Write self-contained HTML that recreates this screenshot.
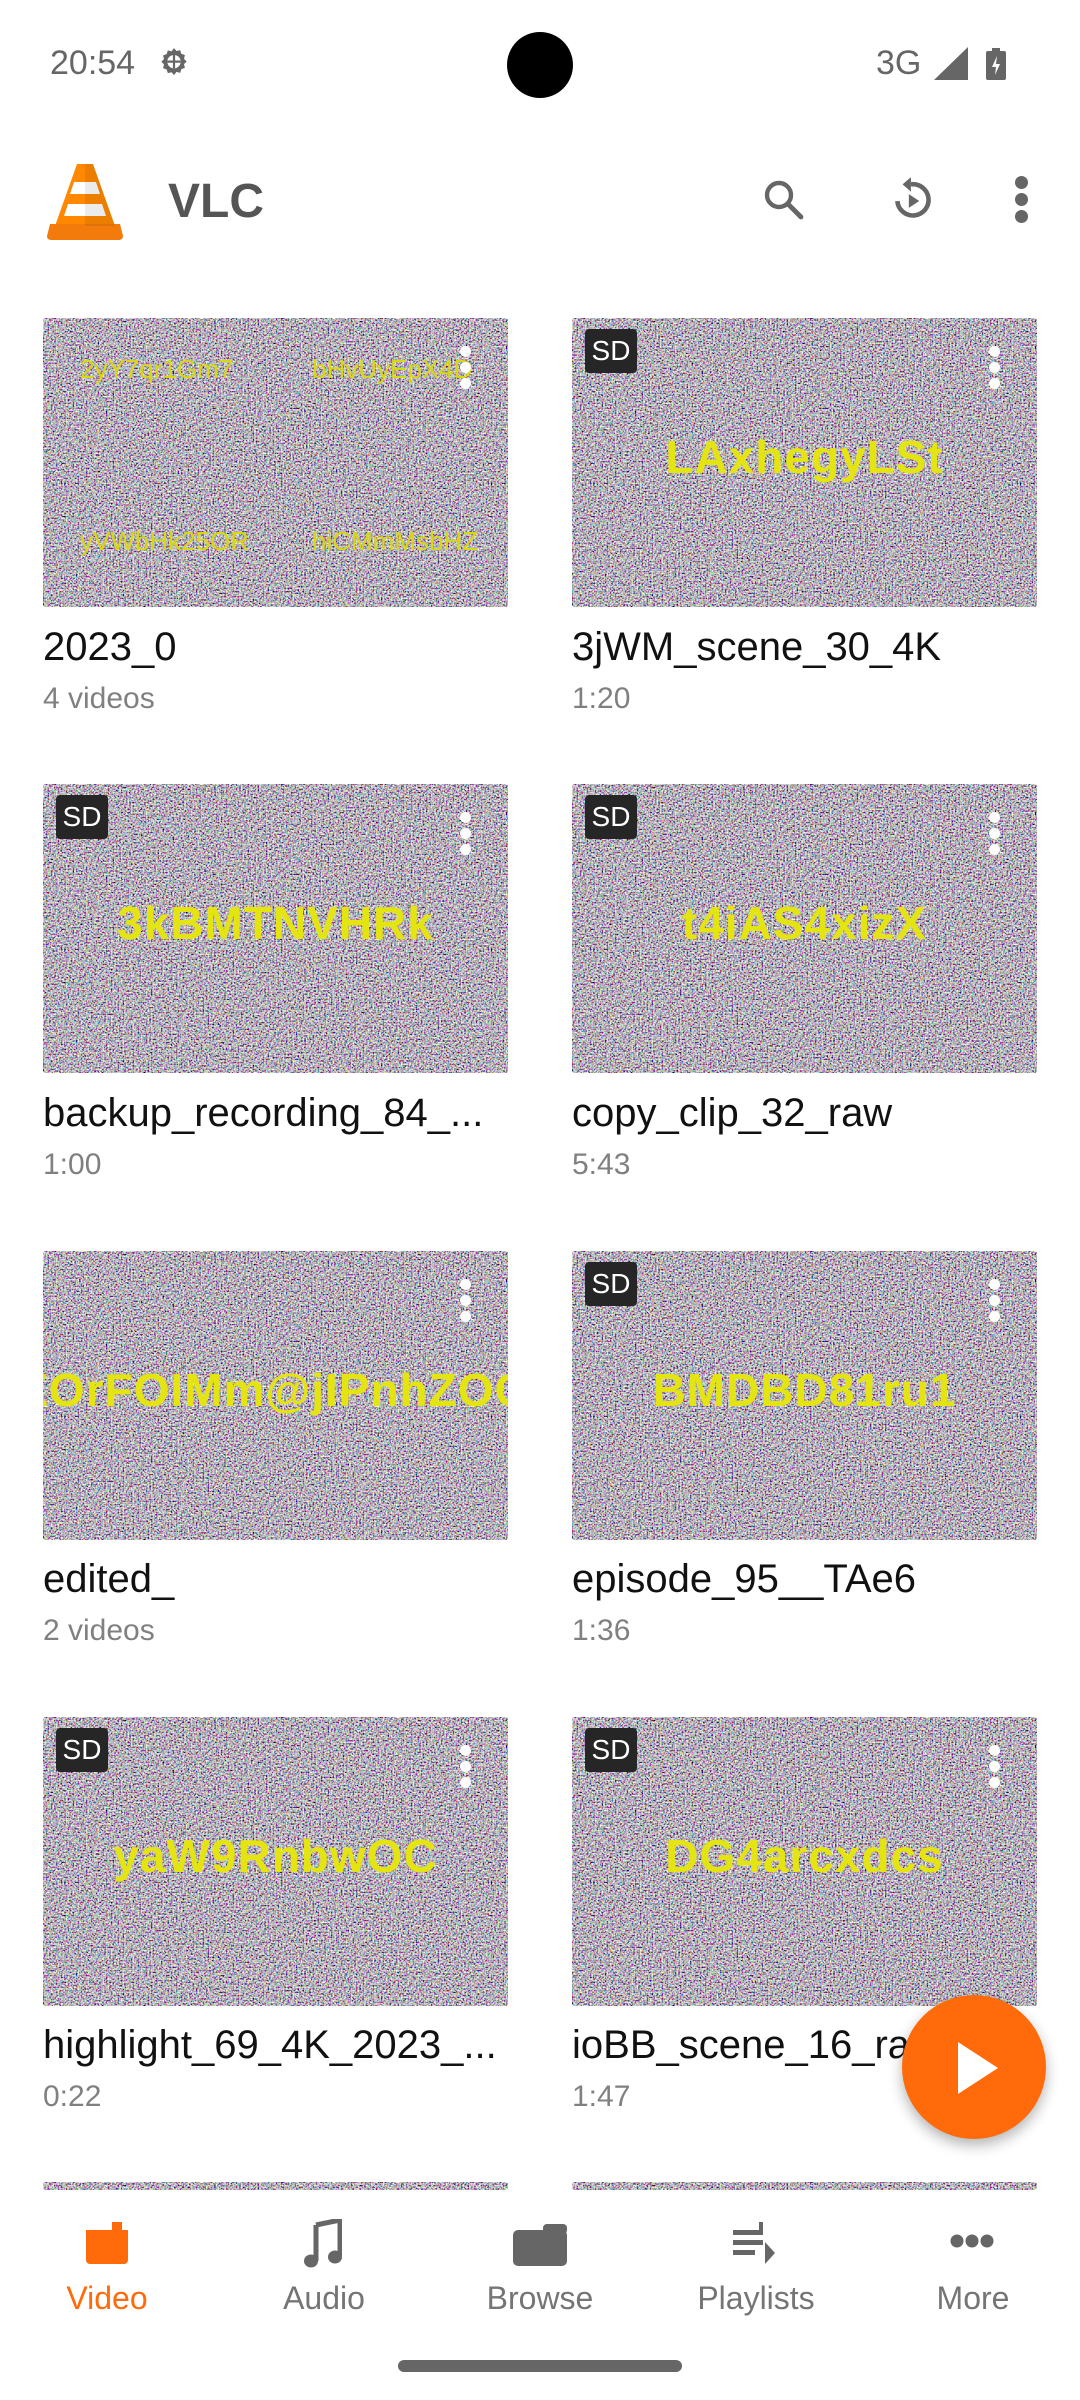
<!DOCTYPE html>
<html><head><meta charset="utf-8">
<style>
*{margin:0;padding:0;box-sizing:border-box}
body{width:1080px;height:2400px;background:#fff;position:relative;overflow:hidden;font-family:"Liberation Sans",sans-serif}
.abs{position:absolute}
.thumb{position:absolute;width:465px;height:289px;overflow:hidden;border-radius:3px;background:#777}
.thumb svg.n{position:absolute;left:0;top:0}
.ct{position:absolute;left:0;right:0;text-align:center;color:#e4e410;font-size:46px;top:112px;white-space:nowrap;letter-spacing:1px;font-weight:bold}
.sm{position:absolute;color:#d8d810;font-size:26px;white-space:nowrap}
.sd{position:absolute;left:13px;top:11px;width:52px;height:44px;background:#262626;border-radius:4px;color:#fff;font-size:28px;text-align:center;line-height:44px}
.dots{position:absolute;right:36px;top:28px;width:12px}
.dots i{display:block;width:11px;height:11px;border-radius:50%;background:#fff;margin-bottom:5px}
.title{position:absolute;font-size:40px;color:#111;white-space:nowrap;overflow:hidden;width:465px}
.sub{position:absolute;font-size:30px;color:#808080;white-space:nowrap}
.nav{position:absolute;left:0;top:2190px;width:1080px;height:210px;background:#fff;z-index:5}
.z{z-index:6}
.lbl{position:absolute;top:2280px;font-size:32px;color:#757575;width:200px;text-align:center;z-index:6}
</style></head><body>
<svg width="0" height="0" style="position:absolute"><defs>
<filter id="nz" x="0" y="0" width="100%" height="100%">
<feTurbulence type="fractalNoise" baseFrequency="0.6" numOctaves="2" seed="3"/>
<feColorMatrix type="saturate" values="0.55"/>
<feComponentTransfer><feFuncR type="linear" slope="2.6" intercept="-0.82"/><feFuncG type="linear" slope="2.6" intercept="-0.84"/><feFuncB type="linear" slope="2.6" intercept="-0.8"/><feFuncA type="linear" slope="0" intercept="1"/></feComponentTransfer>
</filter></defs></svg>

<!-- status bar -->
<div class="abs" style="left:50px;top:44px;font-size:34px;color:#666">20:54</div>
<svg class="abs" style="left:155px;top:45px" width="38" height="38" viewBox="0 0 24 24"><path fill="#666" d="M12 2l1.6 1.8 2.3-.6.7 2.3 2.3.9-.6 2.3L20 10.5l-1.7 1.6.6 2.3-2.3.9-.7 2.3-2.3-.6L12 19l-1.6-1.8-2.3.6-.7-2.3-2.3-.9.6-2.3L4 10.5l1.7-1.6-.6-2.3 2.3-.9.7-2.3 2.3.6z"/><circle cx="12" cy="10.5" r="4.2" fill="#fff"/><path d="M7.8 10.5h8.4M12 6.3v8.4" stroke="#666" stroke-width="1.4"/></svg>
<div class="abs" style="left:507px;top:32px;width:66px;height:66px;border-radius:50%;background:#000"></div>
<div class="abs" style="left:876px;top:44px;font-size:34px;color:#666">3G</div>
<svg class="abs" style="left:934px;top:47px" width="34" height="33"><path d="M34 0V33H0z" fill="#666"/></svg>
<svg class="abs" style="left:986px;top:48px" width="20" height="32"><rect x="0" y="3" width="20" height="29" rx="2" fill="#666"/><rect x="6" y="0" width="8" height="4" fill="#666"/><path d="M11 8L6 19h4l-1 8 5-11h-4z" fill="#fff"/></svg>

<!-- app bar -->
<svg class="abs" style="left:44px;top:160px" width="82" height="82" viewBox="0 0 82 82">
<path d="M33 4h16l22 62H11z" fill="#ff8800"/>
<path d="M30 22h22l4 12H26z" fill="#fff"/><path d="M24 44h34l4 12H20z" fill="#fff"/>
<path d="M6 64h70l3 12c0 3-2 4-5 4H8c-3 0-5-1-5-4z" fill="#f27b0c"/>
<path d="M41 4h8l22 62H41z" fill="#000" opacity=".08"/></svg>
<div class="abs" style="left:168px;top:174px;font-size:48px;font-weight:bold;color:#555">VLC</div>
<svg class="abs" style="left:760px;top:176px" width="48" height="48" viewBox="0 0 24 24"><circle cx="9.5" cy="9.5" r="6" fill="none" stroke="#666" stroke-width="2.2"/><path d="M14 14l6.5 6.5" stroke="#666" stroke-width="2.4" stroke-linecap="round"/></svg>
<svg class="abs" style="left:888px;top:174px" width="50" height="52" viewBox="0 0 24 24"><path d="M4.5 12.5A7.5 7.5 0 1 0 11 4.5" fill="none" stroke="#666" stroke-width="2.2"/><path d="M11 1v7l-4-3.5z" fill="#666"/><path d="M10 9.2v6.6l5-3.3z" fill="#666"/></svg>
<div class="abs" style="left:1015px;top:176px;width:14px"><i style="display:block;width:13px;height:13px;border-radius:50%;background:#666;margin-bottom:4px"></i><i style="display:block;width:13px;height:13px;border-radius:50%;background:#666;margin-bottom:4px"></i><i style="display:block;width:13px;height:13px;border-radius:50%;background:#666"></i></div>

<!-- row1 -->
<div class="thumb" style="left:43px;top:318px"><svg class="n" width="465" height="289"><rect width="465" height="289" filter="url(#nz)"/></svg>
<div class="sm" style="left:37px;top:36px">2yY7qr1Gm7</div><div class="sm" style="left:269px;top:36px">bHvUyEpX4D</div>
<div class="sm" style="left:37px;top:208px">yVWbHk25OR</div><div class="sm" style="left:269px;top:208px">hiCMmMsbHZ</div>
<div class="dots"><i></i><i></i><i></i></div></div>
<div class="title" style="left:43px;top:625px">2023_0</div>
<div class="sub" style="left:43px;top:682px">4 videos</div>

<div class="thumb" style="left:572px;top:318px"><svg class="n" width="465" height="289"><rect width="465" height="289" filter="url(#nz)"/></svg>
<div class="ct">LAxhegyLSt</div><div class="sd">SD</div><div class="dots"><i></i><i></i><i></i></div></div>
<div class="title" style="left:572px;top:625px">3jWM_scene_30_4K</div>
<div class="sub" style="left:572px;top:682px">1:20</div>

<!-- row2 -->
<div class="thumb" style="left:43px;top:784px"><svg class="n" width="465" height="289"><rect width="465" height="289" filter="url(#nz)"/></svg>
<div class="ct">3kBMTNVHRk</div><div class="sd">SD</div><div class="dots"><i></i><i></i><i></i></div></div>
<div class="title" style="left:43px;top:1091px">backup_recording_84_...</div>
<div class="sub" style="left:43px;top:1148px">1:00</div>

<div class="thumb" style="left:572px;top:784px"><svg class="n" width="465" height="289"><rect width="465" height="289" filter="url(#nz)"/></svg>
<div class="ct">t4iAS4xizX</div><div class="sd">SD</div><div class="dots"><i></i><i></i><i></i></div></div>
<div class="title" style="left:572px;top:1091px">copy_clip_32_raw</div>
<div class="sub" style="left:572px;top:1148px">5:43</div>

<!-- row3 -->
<div class="thumb" style="left:43px;top:1251px"><svg class="n" width="465" height="289"><rect width="465" height="289" filter="url(#nz)"/></svg>
<div class="ct" style="left:-30px;right:-30px">ZOrFOIMm@jIPnhZOQ</div><div class="dots"><i></i><i></i><i></i></div></div>
<div class="title" style="left:43px;top:1557px">edited_</div>
<div class="sub" style="left:43px;top:1614px">2 videos</div>

<div class="thumb" style="left:572px;top:1251px"><svg class="n" width="465" height="289"><rect width="465" height="289" filter="url(#nz)"/></svg>
<div class="ct">BMDBD81ru1</div><div class="sd">SD</div><div class="dots"><i></i><i></i><i></i></div></div>
<div class="title" style="left:572px;top:1557px">episode_95__TAe6</div>
<div class="sub" style="left:572px;top:1614px">1:36</div>

<!-- row4 -->
<div class="thumb" style="left:43px;top:1717px"><svg class="n" width="465" height="289"><rect width="465" height="289" filter="url(#nz)"/></svg>
<div class="ct">yaW9RnbwOC</div><div class="sd">SD</div><div class="dots"><i></i><i></i><i></i></div></div>
<div class="title" style="left:43px;top:2023px">highlight_69_4K_2023_...</div>
<div class="sub" style="left:43px;top:2080px">0:22</div>

<div class="thumb" style="left:572px;top:1717px"><svg class="n" width="465" height="289"><rect width="465" height="289" filter="url(#nz)"/></svg>
<div class="ct">DG4arcxdcs</div><div class="sd">SD</div><div class="dots"><i></i><i></i><i></i></div></div>
<div class="title" style="left:572px;top:2023px">ioBB_scene_16_raw</div>
<div class="sub" style="left:572px;top:2080px">1:47</div>

<!-- row5 partial -->
<div class="thumb" style="left:43px;top:2182px;height:8px"><svg class="n" width="465" height="8"><rect width="465" height="8" filter="url(#nz)"/></svg></div>
<div class="thumb" style="left:572px;top:2182px;height:8px"><svg class="n" width="465" height="8"><rect width="465" height="8" filter="url(#nz)"/></svg></div>

<!-- FAB -->
<div class="abs z" style="left:902px;top:1995px;width:144px;height:144px;border-radius:50%;background:#ff6a0a;box-shadow:0 6px 14px rgba(0,0,0,.3)"></div>
<svg class="abs z" style="left:956px;top:2040px" width="44" height="56"><path d="M2 2L42 28 2 54z" fill="#fff"/></svg>

<!-- bottom nav -->
<div class="nav"></div>
<svg class="abs z" style="left:82px;top:2220px" width="50" height="44"><path d="M4 10h42v30a4 4 0 0 1-4 4H8a4 4 0 0 1-4-4z" fill="#ff6a0a"/><path d="M30 2h10v10H30z" fill="#ff6a0a"/></svg>
<svg class="abs z" style="left:304px;top:2219px" width="38" height="50" viewBox="0 0 38 50"><path d="M12 6l24-5v36" fill="none" stroke="#666" stroke-width="5"/><path d="M12 6v36" stroke="#666" stroke-width="5"/><ellipse cx="7" cy="42" rx="7" ry="6.5" fill="#666"/><ellipse cx="31" cy="38" rx="7" ry="6.5" fill="#666"/></svg>
<svg class="abs z" style="left:513px;top:2224px" width="54" height="42"><rect x="0" y="6" width="54" height="36" rx="5" fill="#666"/><rect x="30" y="0" width="24" height="10" rx="4" fill="#666"/></svg>
<svg class="abs z" style="left:733px;top:2222px" width="44" height="42"><rect x="0" y="8" width="30" height="5" fill="#666"/><rect x="0" y="18" width="30" height="5" fill="#666"/><rect x="0" y="28" width="22" height="5" fill="#666"/><path d="M32 20l10 11-10 11z" fill="#666"/><rect x="26" y="0" width="4" height="12" fill="#666"/></svg>
<svg class="abs z" style="left:950px;top:2233px" width="44" height="16"><circle cx="7" cy="8" r="6.5" fill="#666"/><circle cx="22" cy="8" r="6.5" fill="#666"/><circle cx="37" cy="8" r="6.5" fill="#666"/></svg>
<div class="lbl" style="left:7px;color:#ff6a0a">Video</div>
<div class="lbl" style="left:224px">Audio</div>
<div class="lbl" style="left:440px">Browse</div>
<div class="lbl" style="left:656px">Playlists</div>
<div class="lbl" style="left:873px">More</div>

<!-- gesture bar -->
<div class="abs z" style="left:398px;top:2360px;width:284px;height:12px;border-radius:6px;background:#666"></div>
</body></html>
